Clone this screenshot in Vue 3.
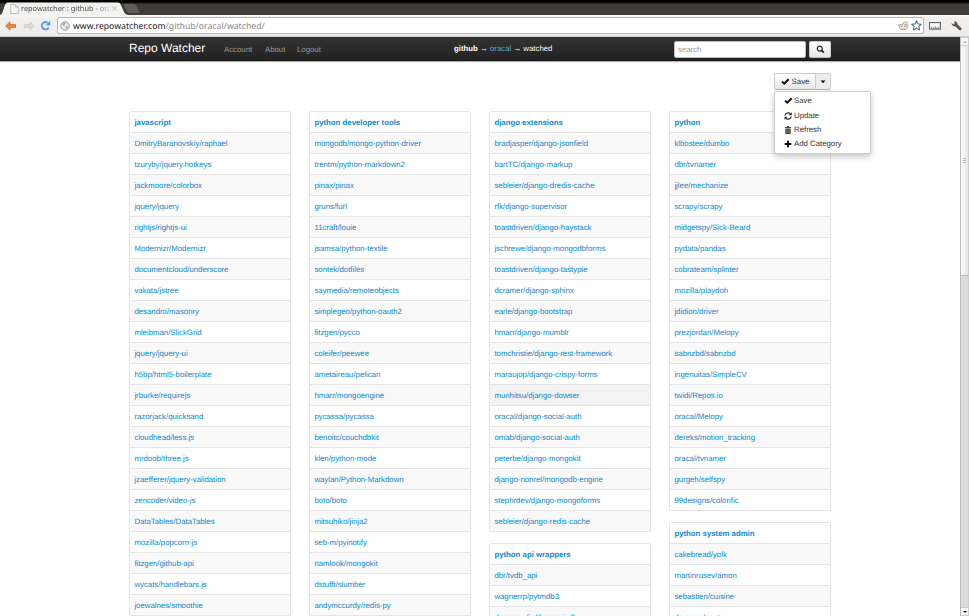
<script setup>
const columns = [
  [
    {
      title: 'javascript',
      repos: ['DmitryBaranovskiy/raphael', 'tzuryby/jquery.hotkeys', 'jackmoore/colorbox', 'jquery/jquery', 'rightjs/rightjs-ui', 'Modernizr/Modernizr', 'documentcloud/underscore', 'vakata/jstree', 'desandro/masonry', 'mleibman/SlickGrid', 'jquery/jquery-ui', 'h5bp/html5-boilerplate', 'jrburke/requirejs', 'razorjack/quicksand', 'cloudhead/less.js', 'mrdoob/three.js', 'jzaefferer/jquery-validation', 'zencoder/video-js', 'DataTables/DataTables', 'mozilla/popcorn-js', 'fitzgen/github-api', 'wycats/handlebars.js', 'joewalnes/smoothie'],
    },
  ],
  [
    {
      title: 'python developer tools',
      repos: ['mongodb/mongo-python-driver', 'trentm/python-markdown2', 'pinax/pinax', 'gruns/furl', '11craft/louie', 'jsamsa/python-textile', 'sontek/dotfiles', 'saymedia/remoteobjects', 'simplegeo/python-oauth2', 'fitzgen/pycco', 'coleifer/peewee', 'ametaireau/pelican', 'hmarr/mongoengine', 'pycassa/pycassa', 'benoitc/couchdbkit', 'klen/python-mode', 'waylan/Python-Markdown', 'boto/boto', 'mitsuhiko/jinja2', 'seb-m/pyinotify', 'namlook/mongokit', 'dstufft/slumber', 'andymccurdy/redis-py'],
    },
  ],
  [
    {
      title: 'django extensions',
      repos: ['bradjasper/django-jsonfield', 'bartTC/django-markup', 'sebleier/django-dredis-cache', 'rfk/django-supervisor', 'toastdriven/django-haystack', 'jschrewe/django-mongodbforms', 'toastdriven/django-tastypie', 'dcramer/django-sphinx', 'earle/django-bootstrap', 'hmarr/django-mumblr', 'tomchristie/django-rest-framework', 'maraujop/django-crispy-forms', 'munhitsu/django-dowser', 'oracal/django-social-auth', 'omab/django-social-auth', 'peterbe/django-mongokit', 'django-nonrel/mongodb-engine', 'stephrdev/django-mongoforms', 'sebleier/django-redis-cache'],
    },
    { title: 'python api wrappers', repos: ['dbr/tvdb_api', 'wagnerrp/pytmdb3', 'doganaydin/themoviedb'] },
  ],
  [
    {
      title: 'python',
      repos: ['klbostee/dumbo', 'dbr/tvnamer', 'jjlee/mechanize', 'scrapy/scrapy', 'midgetspy/Sick-Beard', 'pydata/pandas', 'cobrateam/splinter', 'mozilla/playdoh', 'jdidion/driver', 'prezjordan/Melopy', 'sabnzbd/sabnzbd', 'ingenuitas/SimpleCV', 'twidi/Repos.io', 'oracal/Melopy', 'dereks/motion_tracking', 'oracal/tvnamer', 'gurgeh/selfspy', '99designs/colorific'],
    },
    { title: 'python system admin', repos: ['cakebread/yolk', 'martinrusev/amon', 'sebastien/cuisine', 'dcramer/sentry'] },
  ],
]
const active = 'munhitsu/django-dowser'
</script>

<template>
  <div class="window">
    <header class="tabstrip">
      <svg class="tabshape" width="145" height="15" viewBox="0 0 145 15">
        <path d="M0 15C3 14 3 10 5 5Q6 2.500 8 2.500H118Q120 2.500 121 5L124 12Q125 14.500 128 15Z" fill="#f2f1f0" />
        <path d="M124 4.500H134Q135.500 4.500 136 6L139 12.500H129Q127.500 12.500 127 11Z" fill="#5f5e59" stroke="#706f6a" stroke-width=".5" />
      </svg>
      <div class="tab">
        <svg width="9" height="10" viewBox="0 0 9 10"><path d="M.7.6h5L8.300 3v6.500H.7z" fill="#f4f4f4" stroke="#aaa" stroke-width=".7" /><path d="M5.600.6V3h2.700" fill="#ddd" stroke="#aaa" stroke-width=".6" /></svg>
        <span class="tabtitle">repowatcher : github - ora</span>
        <svg class="close" width="5" height="5" viewBox="0 0 5 5"><path d="M.6.6l3.800 3.800M4.400.6L.6 4.400" stroke="#aaa" stroke-width=".9" /></svg>
      </div>
    </header>

    <div class="toolbar">
      <svg class="back" width="12" height="10" viewBox="0 0 12 10"><path d="M.6 5L5 .8v2.700h5.600v3H5v2.700z" fill="#ed8740" stroke="#cf6a29" stroke-width=".7" stroke-linejoin="round" /></svg>
      <svg class="forward" width="12" height="10" viewBox="0 0 12 10"><path d="M11.400 5L7 .8v2.700H1.400v3H7v2.700z" fill="#dcdbd9" stroke="#cac8c6" stroke-width=".7" stroke-linejoin="round" /></svg>
      <svg class="reload" width="11" height="11" viewBox="0 0 11 11"><path d="M8.700 7.700A3.700 3.700 0 1 1 7.500 2.600" fill="none" stroke="#5a9bdc" stroke-width="2" /><path d="M5.500 5.200L10.200.7v4.700z" fill="#5a9bdc" /></svg>
      <div class="urlbar">
        <svg class="globe" width="10" height="10" viewBox="0 0 10 10"><circle cx="5" cy="5" r="4.200" fill="#eee" stroke="#888" stroke-width=".9" /><path d="M2 2.500L4.600 1.400 6 2.300 4.700 3.800 4.300 5.400 2.500 4.300zM6 5l2 .5L7 7.800 5.500 8z" fill="#aaa" /></svg>
        <span class="url"><b>www.repowatcher.com</b>/github/oracal/watched/</span>
        <svg class="reddit" width="11" height="10" viewBox="0 0 11 10">
          <path d="M5.200 3l.7-2 2.300.6" fill="none" stroke="#999" stroke-width=".7" />
          <circle cx="8.700" cy="1.600" r=".9" fill="#eee" stroke="#999" stroke-width=".5" />
          <circle cx="1.700" cy="4.300" r="1.100" fill="#eee" stroke="#999" stroke-width=".6" /><circle cx="9" cy="4.300" r="1.100" fill="#eee" stroke="#999" stroke-width=".6" />
          <ellipse cx="5.300" cy="5.900" rx="4" ry="3" fill="#f0f0f0" stroke="#999" stroke-width=".8" />
          <circle cx="3.800" cy="5.300" r=".9" fill="#ee8a5c" /><circle cx="6.900" cy="5.300" r=".9" fill="#ee8a5c" />
          <path d="M3.600 7.200q1.700 1 3.400 0" fill="none" stroke="#999" stroke-width=".5" />
        </svg>
        <svg class="star" width="11" height="11" viewBox="0 0 11 11"><path d="M5.500.7l1.400 3.200 3.500.3-2.600 2.300.8 3.500-3.100-1.900-3.100 1.900.8-3.500L.6 4.200l3.500-.3z" fill="#fff" stroke="#596f92" stroke-width="1.100" stroke-linejoin="round" /></svg>
      </div>
      <svg class="ruler" width="12" height="8" viewBox="0 0 12 8"><rect x=".6" y=".6" width="10.800" height="6.500" fill="#f8f8f8" stroke="#555" /><path d="M2.800 7V4.800M4.600 7V5.500M6.200 7V4.300M7.800 7V5.500M9.400 7V4.800" stroke="#555" stroke-width=".7" /></svg>
      <svg class="wrench" width="11" height="10" viewBox="0 0 11 10"><path d="M.3 2.300L2.700 3.200 3.800 2.100 3 .3Q5.300 0 6.400 2L6.500 3.300 10.300 6.900Q11 8 10.100 9 9 9.800 8.100 8.900L4.500 5.400Q1.200 5.700.3 2.300z" fill="#555" /></svg>
    </div>

    <div class="viewport">
      <main class="page">
        <nav class="navbar">
          <div class="container navrow">
            <span class="brand">Repo Watcher</span>
            <span class="navlink account">Account</span>
            <span class="navlink about">About</span>
            <span class="navlink">Logout</span>
            <div class="crumbs"><b>github</b> → <span class="user">oracal</span> → watched</div>
            <div class="search">search</div>
            <div class="btn searchbtn">
              <svg width="9" height="9" viewBox="0 0 9 9"><circle cx="3.800" cy="3.600" r="2.500" fill="none" stroke="#222" stroke-width="1.200" /><path d="M5.600 5.400L7.800 7.600" stroke="#222" stroke-width="1.600" /></svg>
            </div>
          </div>
        </nav>

        <div class="container">
          <div class="actions">
            <div class="group">
              <div class="btn save">
                <svg width="9" height="8" viewBox="0 0 9 8"><path d="M.3 4.300L1.800 2.900l1.400 1.300L6.900.6 8.400 2 3.300 7.100z" fill="#111" /></svg>
                <span>Save</span>
              </div>
              <div class="btn caret"><svg width="6" height="4" viewBox="0 0 6 4"><path d="M.5.500h5L3 3.300z" fill="#111" /></svg></div>
              <ul class="menu">
                <li><svg width="9" height="8" viewBox="0 0 9 8"><path d="M.3 4.300L1.800 2.900l1.400 1.300L6.900.6 8.400 2 3.300 7.100z" fill="#111" /></svg><span>Save</span></li>
                <li><svg width="9" height="8" viewBox="0 0 9 8"><path d="M1 3.500A3.100 3.100 0 0 1 6.400 1.900M7.200 4.500A3.100 3.100 0 0 1 1.800 6.100" fill="none" stroke="#222" stroke-width="1.200" /><path d="M7.700.3v3H4.700zM.5 7.700v-3h3z" fill="#222" /></svg><span>Update</span></li>
                <li><svg width="9" height="8" viewBox="0 0 9 8"><path d="M1 1h2V.1h2V1h2v1H1zM1.300 2.400h5.400V8H1.300z" fill="#444" /><path d="M2.700 3.200v4M4 3.200v4M5.300 3.200v4" stroke="#aaa" stroke-width=".4" /></svg><span>Refresh</span></li>
                <li><svg width="9" height="8" viewBox="0 0 9 8"><path d="M3 .7h2v2.300h2.300v2H5v2.300H3V5H.7V3H3z" fill="#111" /></svg><span>Add Category</span></li>
              </ul>
            </div>
          </div>

          <div class="columns">
            <div v-for="(column, i) in columns" :key="i" class="column">
              <section v-for="group in column" :key="group.title" class="list">
                <div class="row heading">{{ group.title }}</div>
                <div v-for="repo in group.repos" :key="repo" class="row" :class="{ active: repo === active }">{{ repo }}</div>
              </section>
            </div>
          </div>
        </div>
      </main>

      <aside class="scrollbar">
        <div class="arrow up"><i></i></div>
        <div class="thumb"><span></span><span></span><span></span></div>
        <div class="arrow down"><i></i></div>
      </aside>
    </div>
  </div>
</template>

<style>
body { margin: 0; overflow: hidden; background: #fff; }
</style>

<style scoped>
* { box-sizing: border-box; }
svg { display: block; flex: none; }
.window { width: 969px; height: 616px; overflow: hidden; display: flex; flex-direction: column; font: 7.8px/11px "Liberation Sans", Arial, sans-serif; text-rendering: geometricPrecision; color: #333; }
.tabstrip { position: relative; flex: none; height: 15px; background: linear-gradient(#000 0, #000 2px, #3c3b37 4px, #3f3e39 100%); }
.tabshape { position: absolute; left: 0; top: 0; }
.tab { position: relative; display: flex; align-items: center; height: 15px; padding: 3px 0 1px 10px; font-family: "Noto Sans", sans-serif; font-size: 7.4px; color: #555; }
.tabtitle { width: 88px; margin-left: 2px; padding-top: 1px; white-space: nowrap; background: linear-gradient(90deg, #444 78%, #bbb 100%); background-clip: text; color: transparent; }
.close { margin-left: 3px; }
.toolbar { flex: none; display: flex; align-items: center; height: 22px; padding: 0 8px 0 5px; background: linear-gradient(#f8f7f6, #f0efee 20%, #eeedeb); border-bottom: 1px solid #ccc; }
.forward { margin-left: 6px; }
.reload { margin-left: 5px; }
.urlbar { flex: none; width: 867px; height: 17px; margin-left: 6px; display: flex; align-items: center; padding: 0 1px 0 2px; border: 1px solid #b9b8b6; border-radius: 2px; background: #fff; }
.url { flex: 1; margin-left: 3px; padding-top: 1px; font-family: "Noto Sans", sans-serif; font-size: 8.7px; color: #888; }
.url b { font-weight: 400; color: #222; }
.star { margin-left: 2px; }
.ruler { margin-left: 5px; }
.wrench { margin-left: 10px; }
.viewport { flex: 1; min-height: 0; display: flex; }
.page { width: 960px; overflow: hidden; }
.navbar { height: 24px; background: linear-gradient(#333, #222); box-shadow: 0 1px 1px rgba(0,0,0,.3); border-bottom: 1px solid #181818; }
.container { width: 702px; margin: 0 auto; }
.navrow { display: flex; align-items: center; height: 24px; color: #fff; }
.brand { width: 95px; font-size: 12px; line-height: 14px; padding-bottom: 2px; white-space: nowrap; }
.navlink { color: #999; padding-top: 1px; }
.account { width: 41px; }
.about { width: 32px; }
.crumbs { width: 220px; padding-bottom: 2px; white-space: nowrap; }
.navlink + .crumbs { margin-left: auto; }
.user { color: #5ba9d0; }
.search { width: 132px; height: 17px; padding: 2px 3px; background: #fff; border: 1px solid #bbb; border-radius: 2px; color: #999; }
.btn { display: flex; align-items: center; justify-content: center; height: 17px; border: 1px solid #ccc; border-bottom-color: #b3b3b3; border-radius: 2px; background: linear-gradient(#fff, #e6e6e6); color: #333; }
.searchbtn { width: 22px; margin-left: 3px; }
.actions { display: flex; justify-content: flex-end; height: 50px; padding-top: 12px; }
.group { position: relative; display: flex; width: 57px; height: 17px; }
.save { width: 42px; gap: 2px; border-radius: 2px 0 0 2px; }
.save span { padding-bottom: 1px; }
.caret { width: 16px; margin-left: -1px; background: #ededed; border-radius: 0 2px 2px 0; }
.menu { position: absolute; left: 0; top: 18px; width: 97px; height: 63px; margin: 0; padding: 2px 0 0 9px; list-style: none; background: #fff; border: 1px solid #ccc; border-radius: 2px; box-shadow: 0 3px 6px rgba(0,0,0,.22); z-index: 2; }
.menu li { display: flex; align-items: center; gap: 1px; height: 14.4px; }
.menu span { padding-bottom: 1px; }
.columns { display: flex; gap: 18px; }
.column { width: 162px; }
.list { margin-bottom: 10.8px; border: 1px solid #e4e4e4; border-top: 0; border-radius: 2px; }
.row { height: 21px; padding: 5px 4.400px 3px; border-top: 1px solid #e4e4e4; color: #0b88cc; white-space: nowrap; }
.row:nth-child(even) { background: #f9f9f9; }
.row.active { background: #f3f3f3; }
.heading { font-weight: 700; border-radius: 2px 2px 0 0; }
.scrollbar { width: 9px; display: flex; flex-direction: column; background: #dddbd9; border-left: 1px solid #bbb; border-right: 1px solid #ccc; }
.arrow { flex: none; height: 9px; display: flex; align-items: center; justify-content: center; background: #f7f7f6; border: 1px solid #ccc; border-width: 1px 0; }
.arrow i { border: 2px solid transparent; }
.up i { border-bottom-color: #aaa; border-top: 0; }
.down { margin-top: auto; }
.down i { border-top-color: #111; border-bottom: 0; }
.thumb { flex: none; height: 230px; display: flex; flex-direction: column; align-items: center; justify-content: center; gap: 1px; background: linear-gradient(90deg, #fbfbfa, #e8e7e6); border-bottom: 1px solid #bbb; }
.thumb span { width: 3px; height: 1px; background: #bbb; }
</style>
